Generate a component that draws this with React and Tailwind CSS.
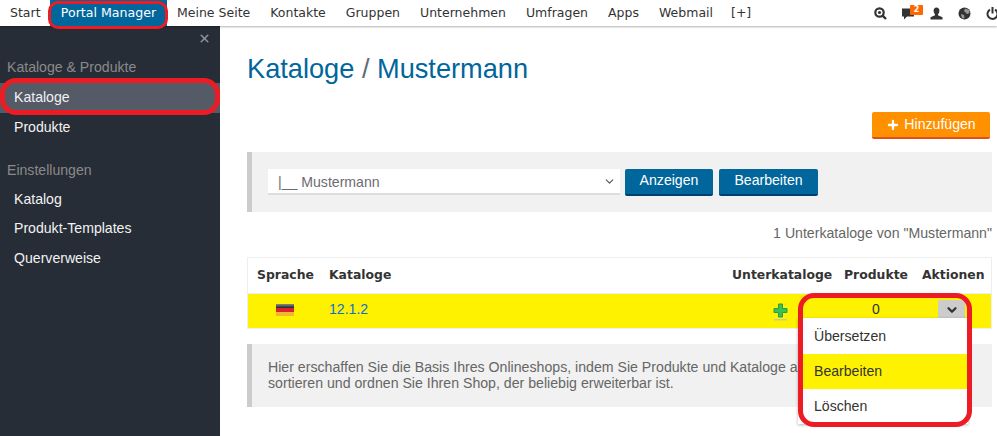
import React from 'react';
import { Plus, ChevronDown, X } from 'lucide-react';

const navItems = ['Meine Seite', 'Kontakte', 'Gruppen', 'Unternehmen', 'Umfragen', 'Apps', 'Webmail'];

const SideLink = ({ children }) => (
  <div className="h-[30px] pl-[14px] flex items-center text-[14.1px] text-[#f2f2f2]">{children}</div>
);

const SearchIcon = () => (
  <svg width="13" height="13" viewBox="0 0 13 13" className="shrink-0">
    <circle cx="5.5" cy="5.5" r="4.2" fill="none" stroke="#333" strokeWidth="2.2" />
    <circle cx="5.5" cy="5.5" r="1.6" fill="#333" />
    <path d="M8.6 8.6 L12 12" stroke="#333" strokeWidth="2.4" />
  </svg>
);

const ChatIcon = () => (
  <svg width="13" height="13" viewBox="0 0 13 13" className="shrink-0">
    <path d="M0 1.5 H12 V9.5 H5 L2 12.5 V9.5 H0 Z" fill="#333" />
  </svg>
);

const UserIcon = () => (
  <svg width="13" height="13" viewBox="0 0 13 13" className="shrink-0">
    <path d="M6.5 0.5 C8.4 0.5 9.4 2 9.4 3.8 C9.4 5.4 8.7 6.6 8 7.3 V8.3 L12.5 10.3 V12.5 H0.5 V10.3 L5 8.3 V7.3 C4.3 6.6 3.6 5.4 3.6 3.8 C3.6 2 4.6 0.5 6.5 0.5 Z" fill="#333" />
  </svg>
);

const GlobeIcon = () => (
  <svg width="13" height="13" viewBox="0 0 13 13" className="shrink-0">
    <circle cx="6.5" cy="6.5" r="6" fill="#333" />
    <path d="M7 1.5 L11 3 L11.5 6 L9 7 L7.5 5.5 L6 4 Z M3 7 L6 8 L6.5 11 L4.5 11.5 L3.5 9.5 Z" fill="#999" />
  </svg>
);

const PowerIcon = () => (
  <svg width="13" height="13" viewBox="0 0 13 13" className="shrink-0">
    <path d="M4 2.6 A5 5 0 1 0 9 2.6" fill="none" stroke="#333" strokeWidth="2" />
    <path d="M6.5 0 V6.5" stroke="#333" strokeWidth="2" />
  </svg>
);

const GreenPlus = () => (
  <svg width="15" height="18" viewBox="0 0 15 18" className="shrink-0">
    <path d="M5.5 1 H9.5 V5.5 H14 V9.5 H9.5 V14 H5.5 V9.5 H1 V5.5 H5.5 Z" fill="#3cc04f" stroke="#2a9c46" />
    <rect x="1" y="16" width="13" height="1.5" fill="#c9c9a0" />
  </svg>
);

const App = () => {
  return (
    <div className="relative w-[997px] h-[436px] overflow-hidden bg-white font-['Liberation_Sans',sans-serif]">
      {/* Top bar */}
      <div className="relative z-10 h-[26px] bg-white shadow-[0_1px_2px_rgba(0,0,0,0.3)] flex items-center font-['DejaVu_Sans',sans-serif] text-[12.5px] text-[#333]">
        <span className="pl-[10px] w-[50px]">Start</span>
        <span className="w-[117px] h-[26px] bg-[#00669c] text-white text-[12.6px] flex items-center justify-center">Portal Manager</span>
        <div className="flex items-center gap-[20px] pl-[10px]">
          {navItems.map((item) => (
            <span key={item}>{item}</span>
          ))}
          <span className="-ml-[2px]">[+]</span>
        </div>
        <div className="ml-auto flex items-center gap-[15px] w-[123px] shrink-0">
          <SearchIcon />
          <div className="relative shrink-0">
            <ChatIcon />
            <span className="absolute -top-[2px] left-[8px] w-[13px] h-[10px] rounded-[1px] bg-[#ff6600] text-white text-[8px] font-bold flex items-center justify-center">2</span>
          </div>
          <UserIcon />
          <GlobeIcon />
          <PowerIcon />
        </div>
      </div>

      <div className="flex h-[410px]">
        {/* Sidebar */}
        <aside className="w-[220px] shrink-0 bg-[#272d36]">
          <div className="h-[25px] flex justify-end items-center pr-[9px]">
            <X size={13} strokeWidth={3} className="text-[#8b9199]" />
          </div>
          <div className="h-[32px] pl-[7px] pt-[2px] flex items-center text-[14.1px] text-[#8a8a8a]">Kataloge &amp; Produkte</div>
          <div className="h-[30px] pl-[14px] flex items-center text-[14.1px] text-[#f2f2f2] bg-[#545a66]">Kataloge</div>
          <SideLink>Produkte</SideLink>
          <div className="h-[42px] pl-[7px] pt-[14px] flex items-center text-[14.1px] text-[#8a8a8a]">Einstellungen</div>
          <SideLink>Katalog</SideLink>
          <div className="-mt-[1px]">
            <SideLink>Produkt-Templates</SideLink>
          </div>
          <SideLink>Querverweise</SideLink>
        </aside>

        {/* Main */}
        <main className="flex-1 pl-[27px] pr-[5px]">
          <h1 className="mt-[25px] h-[36px] leading-[36px] text-[27.2px] text-[#00669c]">
            Kataloge <span className="text-[#5f6b75]">/</span> Mustermann
          </h1>

          <div className="mt-[25px] flex justify-end pr-[2px]">
            <button className="w-[118px] h-[27px] rounded-[2px] bg-[#ff9000] border-b-2 border-[#e0501c] text-white text-[14.1px] flex items-center justify-center gap-[4px]">
              <Plus size={14} strokeWidth={4} />
              Hinzufügen
            </button>
          </div>

          <div className="mt-[13px] h-[60px] bg-[#f1f1f1] border-l-[5px] border-[#cccccc] flex items-center pl-[16px]">
            <div className="w-[352px] h-[26px] bg-white border-b-2 border-[#dddddd] flex items-center justify-between pl-[10px] pr-[4px] pt-[4px] text-[14.1px] text-[#6e6a72]">
              <span>|__ Mustermann</span>
              <ChevronDown size={13} className="text-[#555] -mt-[4px]" />
            </div>
            <button className="ml-[5px] w-[88px] h-[27px] rounded-[2px] bg-[#00669c] border-b-2 border-[#00406e] text-white text-[14.1px]">Anzeigen</button>
            <button className="ml-[6px] w-[99px] h-[27px] rounded-[2px] bg-[#00669c] border-b-2 border-[#00406e] text-white text-[14.1px]">Bearbeiten</button>
          </div>

          <div className="mt-[13px] h-[16px] leading-[16px] text-right text-[14.14px] text-[#666]">1 Unterkataloge von "Mustermann"</div>

          <div className="mt-[16px] border border-[#eeeeee] font-['DejaVu_Sans',sans-serif]">
            <div className="h-[35px] flex items-center text-[12.4px] font-bold text-[#333]">
              <span className="w-[81px] pr-[6px] text-center">Sprache</span>
              <span>Kataloge</span>
              <span className="ml-auto w-[112px]">Unterkataloge</span>
              <span className="w-[78px]">Produkte</span>
              <span className="w-[69px]">Aktionen</span>
            </div>
            <div className="h-[35px] bg-[#fff200] border-t border-[#eeeeee] flex items-center pb-[3px]">
              <span className="w-[81px] pr-[8px] flex justify-center">
                <span className="w-[18px] h-[12px] flex flex-col">
                  <span className="h-[4px] bg-[linear-gradient(#8a8a8a,#222)]" />
                  <span className="h-[4px] bg-[#d8242a]" />
                  <span className="h-[4px] bg-[#f2b632]" />
                </span>
              </span>
              <span className="font-['Liberation_Sans',sans-serif] text-[14.1px] text-[#0f6fd6]">12.1.2</span>
              <span className="ml-auto w-[99px] pt-[4px]">
                <GreenPlus />
              </span>
              <span className="w-[53px] font-['Liberation_Sans',sans-serif] text-[14px] text-[#333]">0</span>
              <span className="w-[66px]" />
            </div>
          </div>

          <div className="mt-[15px] h-[63px] bg-[#f1f1f1] border-l-[5px] border-[#cccccc] pl-[16px] pt-[15px] text-[14.15px] leading-[16px] text-[#666] whitespace-nowrap overflow-hidden">
            <p>Hier erschaffen Sie die Basis Ihres Onlineshops, indem Sie Produkte und Kataloge a</p>
            <p>sortieren und ordnen Sie Ihren Shop, der beliebig erweiterbar ist.</p>
          </div>
        </main>
      </div>

      {/* Actions menu */}
      <div className="absolute left-[938px] top-[300px] w-[27px] h-[19px] rounded-t-[2px] bg-[#cccccc] flex items-center justify-center z-20">
        <ChevronDown size={14} strokeWidth={4} className="text-[#333]" />
      </div>
      <div className="absolute left-[798px] top-[318px] w-[170px] h-[106px] bg-white shadow-[0_1px_3px_rgba(0,0,0,0.3)] z-20 text-[14.1px] text-[#333] pt-[1px]">
        <div className="h-[35px] pl-[16px] flex items-center">Übersetzen</div>
        <div className="h-[35px] pl-[16px] flex items-center bg-[#fff200]">Bearbeiten</div>
        <div className="h-[35px] pl-[16px] flex items-center">Löschen</div>
      </div>

      {/* Red highlight marks */}
      <div className="absolute left-[48px] top-[1px] w-[120px] h-[28px] rounded-[10px] border-[3px] border-[#ed1c24] z-30" />
      <div className="absolute left-0 top-[78px] w-[220px] h-[37px] rounded-[16px] border-[5px] border-[#ed1c24] z-30" />
      <div className="absolute left-[798px] top-[293px] w-[174px] h-[134px] rounded-[16px] border-[5px] border-[#ed1c24] z-30" />
    </div>
  );
};

export default App;
